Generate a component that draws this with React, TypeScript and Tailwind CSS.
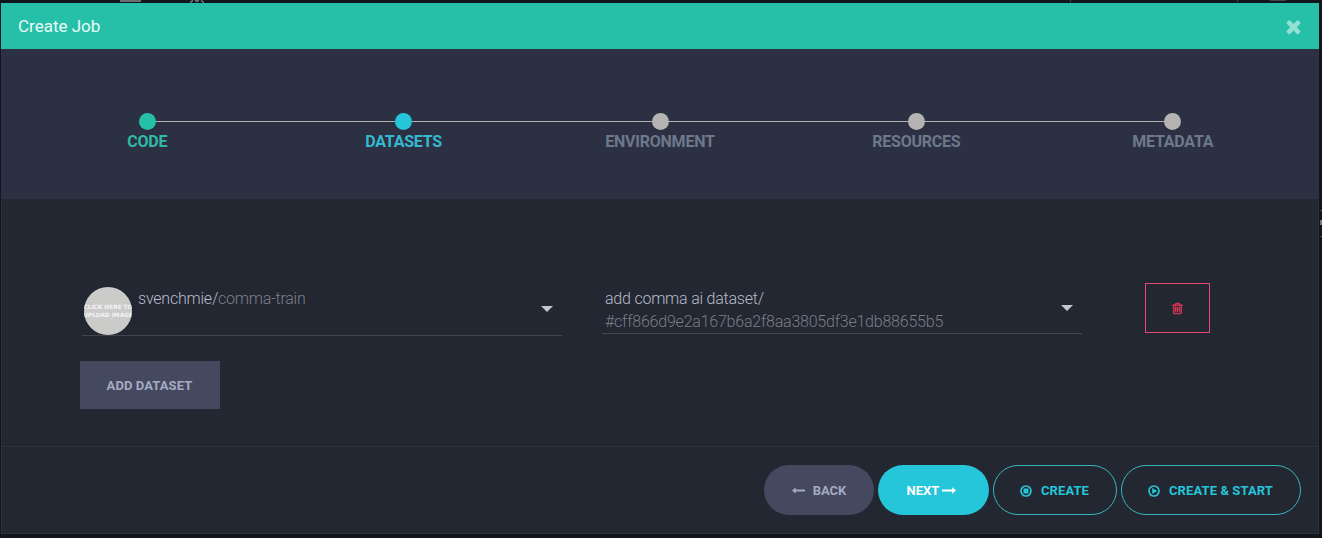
import React from 'react';

type IconProps = { className?: string };

const TimesIcon = ({ className }: IconProps) => (
  <svg viewBox="0 0 1792 1792" fill="currentColor" className={className}>
    <path d="M1490 1322q0 40-28 68l-136 136q-28 28-68 28t-68-28l-294-294-294 294q-28 28-68 28t-68-28l-136-136q-28-28-28-68t28-68l294-294-294-294q-28-28-28-68t28-68l136-136q28-28 68-28t68 28l294 294 294-294q28-28 68-28t68 28l136 136q28 28 28 68t-28 68l-294 294 294 294q28 28 28 68z" />
  </svg>
);

const TrashIcon = ({ className }: IconProps) => (
  <svg viewBox="0 0 1792 1792" fill="currentColor" stroke="currentColor" strokeWidth="50" className={className}>
    <path d="M704 736v576q0 14-9 23t-23 9h-64q-14 0-23-9t-9-23v-576q0-14 9-23t23-9h64q14 0 23 9t9 23zm256 0v576q0 14-9 23t-23 9h-64q-14 0-23-9t-9-23v-576q0-14 9-23t23-9h64q14 0 23 9t9 23zm256 0v576q0 14-9 23t-23 9h-64q-14 0-23-9t-9-23v-576q0-14 9-23t23-9h64q14 0 23 9t9 23zm128 724v-948h-896v948q0 22 7 40.5t14.5 27 10.5 8.5h832q3 0 10.5-8.5t14.5-27 7-40.5zm-672-1076h448l-48-117q-7-9-17-11h-317q-10 2-17 11zm928 32v64q0 14-9 23t-23 9h-96v948q0 83-47 143.5t-113 60.5h-832q-66 0-113-58.5t-47-141.5v-952h-96q-14 0-23-9t-9-23v-64q0-14 9-23t23-9h309l70-167q15-37 54-63t79-26h320q40 0 79 26t54 63l70 167h309q14 0 23 9t9 23z" />
  </svg>
);

const ArrowIcon = ({ className }: IconProps) => (
  <svg viewBox="0 0 14 7" fill="currentColor" className={className}>
    <path d="M0 2.500h10V.8q0-.5.5-.3L14 3.500l-3.500 3q-.5.200-.5-.3V4.500H0z" />
  </svg>
);

const StopCircleIcon = ({ className }: IconProps) => (
  <svg viewBox="0 0 12 12" className={className}>
    <circle cx="6" cy="6" r="5" fill="none" stroke="currentColor" strokeWidth="1.7" />
    <rect x="3.500" y="3.500" width="5" height="5" rx=".3" fill="currentColor" />
  </svg>
);

const PlayCircleIcon = ({ className }: IconProps) => (
  <svg viewBox="0 0 12 12" className={className}>
    <circle cx="6" cy="6" r="5" fill="none" stroke="currentColor" strokeWidth="1.7" />
    <path d="M4.200 3.100v5.800L9.200 6z" fill="currentColor" />
  </svg>
);

const Caret = () => (
  <svg viewBox="0 0 12 6" className="h-1.5 w-3 shrink-0" fill="#c3c7cc">
    <path d="M0 0h12L6 6z" />
  </svg>
);

const steps = [
  { label: 'CODE', dot: 'bg-[#26c0a9]', text: 'text-[#2fb9a6]' },
  { label: 'DATASETS', dot: 'bg-[#25c5da]', text: 'text-[#35b9d0]' },
  { label: 'ENVIRONMENT', dot: 'bg-[#b5b3b3]', text: 'text-[#6e788b]' },
  { label: 'RESOURCES', dot: 'bg-[#b5b3b3]', text: 'text-[#6e788b]' },
  { label: 'METADATA', dot: 'bg-[#b5b3b3]', text: 'text-[#6e788b]' },
];

function Stepper() {
  return (
    <div className="grid h-[150px] grid-cols-5 bg-[#2b3142] px-[18px] pt-16">
      {steps.map((step, i) => (
        <div key={step.label} className="flex flex-col items-center">
          <div className="flex h-[17px] w-full items-center">
            <div className={i === 0 ? 'h-px flex-1' : 'h-px flex-1 bg-[#b5b3b3]'} />
            <div className={`size-[17px] rounded-full ${step.dot}`} />
            <div className={i === steps.length - 1 ? 'h-px flex-1' : 'h-px flex-1 bg-[#b5b3b3]'} />
          </div>
          <span className={`text-base leading-[23px] font-bold tracking-[-0.24px] ${step.text}`}>{step.label}</span>
        </div>
      ))}
    </div>
  );
}

export default function App() {
  return (
    <div className="h-[538px] w-[1322px] overflow-hidden bg-[#12151c] font-['Roboto',sans-serif]">
      <div className="flex h-[3px] items-start">
        <div className="ml-[120px] h-0.5 w-[21px] bg-[#6b6e70]" />
        <svg viewBox="0 0 14 3" className="ml-[49px] h-[3px] w-3.5" fill="none" stroke="#77797b" strokeWidth="1.5">
          <path d="M0 2.500 3 .5M5 0l2 1.500L9 0M11 .5l3 2" />
        </svg>
        <div className="ml-[866px] h-0.5 w-px bg-[#44484b]" />
        <div className="ml-[166px] h-0.5 w-px bg-[#44484b]" />
        <div className="ml-8 h-px w-4 bg-[#44484b]" />
      </div>
      <div className="flex">
        <div className="ml-px flex h-[531px] w-[1318px] flex-col bg-[#232731]">
          <header className="flex h-[46px] items-center justify-between bg-[#26c0a9] pr-[15px] pl-[17px]">
            <h1 className="text-[17px] leading-6 text-[#e9fbf7]">Create Job</h1>
            <button aria-label="Close" className="text-[#93e0d4]">
              <TimesIcon className="size-[21px]" />
            </button>
          </header>
          <Stepper />
          <main className="flex h-[247px] flex-col border-x border-[#2b3039]">
            <div className="flex pt-[84px]">
              <div className="ml-20 flex h-[53px] w-[480px] border-b border-[#424650] pt-1 pl-0.5">
                <div className="flex size-12 shrink-0 items-center justify-center overflow-hidden rounded-full bg-[#cbcbca]">
                  <span className="text-center font-['DejaVu_Sans',sans-serif] text-[5.800px] leading-[8px] font-bold whitespace-nowrap text-[#f4f4f4]">
                    CLICK HERE TO<br />UPLOAD IMAGE
                  </span>
                </div>
                <div className="ml-1.5 flex-1 text-base leading-[23px] font-light tracking-[-0.22px] text-[#b8bbcc]">
                  svenchmie/<span className="text-[#7c7f8a]">comma-train</span>
                </div>
                <div className="mt-[19px] mr-[9px]"><Caret /></div>
              </div>
              <div className="ml-10 flex h-[51px] w-[480px] border-b border-[#424650] pt-1 pl-[3px]">
                <div className="flex-1 text-base leading-[23px] font-light tracking-[-0.22px] text-[#b8bbcc]">
                  add comma ai dataset/
                  <div className="text-[#7a7d88]">#cff866d9e2a167b6a2f8aa3805df3e1db88655b5</div>
                </div>
                <div className="mt-[18px] mr-[9px]"><Caret /></div>
              </div>
              <button
                aria-label="Remove dataset"
                className="ml-[63px] flex h-[50px] w-[65px] items-center justify-center border border-[#e74b6f] text-[#ec3a5c]"
              >
                <TrashIcon className="size-[13px]" />
              </button>
            </div>
            <button className="mt-[25px] ml-[77.500px] h-12 w-[140px] bg-[#444960] pt-0.5 text-[13px] font-bold tracking-[0.1px] text-[#a4abc2]">
              ADD DATASET
            </button>
          </main>
          <footer className="flex h-[88px] gap-1 border border-[#2d323b] pt-[18px] pr-[17px] text-[13px] font-bold">
            <button className="ml-auto flex h-[50px] w-[110px] items-center justify-center rounded-full bg-[#444960] pt-px text-[#a4abc2]">
              <ArrowIcon className="mr-2 h-[7px] w-[13px] rotate-180" />
              BACK
            </button>
            <button className="flex h-[50px] w-[111px] items-center justify-center rounded-full bg-[#25c5da] pt-px pr-1 text-white">
              NEXT
              <ArrowIcon className="ml-[3px] h-[7px] w-3.5" />
            </button>
            <button className="flex h-[50px] w-[124px] items-center justify-center rounded-full border border-[#37b7bd] pt-px pr-px text-[#25c5da]">
              <StopCircleIcon className="mr-[9px] size-3" />
              <span className="tracking-[0.1px]">CREATE</span>
            </button>
            <button className="flex h-[50px] w-[180px] items-center justify-center rounded-full border border-[#37b7bd] pt-px pr-px text-[#25c5da]">
              <PlayCircleIcon className="mr-[9px] size-3" />
              <span className="tracking-[0.1px]">CREATE &amp; START</span>
            </button>
          </footer>
        </div>
        <div className="ml-px flex flex-1 flex-col pt-[207px]">
          <div className="h-px bg-[#345154]" />
          <div className="mt-[9px] h-[5px] bg-[#777777]" />
          <div className="mt-[11px] h-px bg-[#345154]" />
        </div>
      </div>
    </div>
  );
}
